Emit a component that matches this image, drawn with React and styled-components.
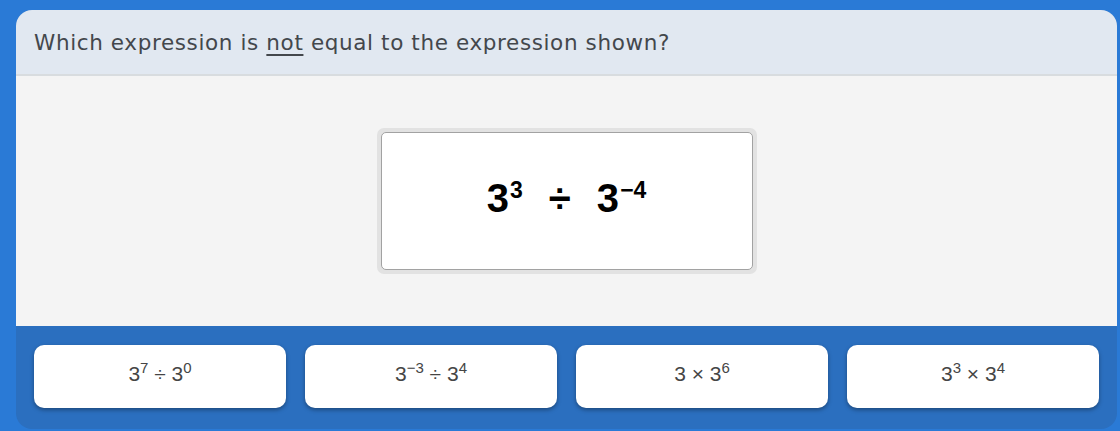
import styled, { createGlobalStyle } from 'styled-components';

const Global = createGlobalStyle`
  html, body {
    margin: 0;
    padding: 0;
    background: #2a7ad6;
  }
`;

const Page = styled.div`
  width: 1120px;
  height: 431px;
  box-sizing: border-box;
  padding: 10px 3px 0 16px;
  background: #2a7ad6;
  overflow: hidden;
`;

const Card = styled.div`
  border-radius: 16px;
  overflow: hidden;
  background: #2b6fbf;
`;

const Header = styled.div`
  height: 64px;
  background: #e1e8f1;
  border-bottom: 2px solid #d8dcdf;
  padding: 0 18px;
  display: flex;
  align-items: center;
  font-family: 'DejaVu Sans', 'Open Sans', sans-serif;
  font-size: 21.5px;
  letter-spacing: 0.62px;
  color: #43474c;

  u {
    text-decoration-thickness: 1.5px;
    text-underline-offset: 4px;
  }
`;

const Body = styled.div`
  height: 250px;
  background: #f4f4f4;
  display: flex;
  justify-content: center;
  padding-top: 52px;
  box-sizing: border-box;
`;

const Frame = styled.div`
  width: 380px;
  height: 146px;
  box-sizing: border-box;
  padding: 4px;
  border-radius: 7px;
  background: #e2e2e2;
`;

const Shown = styled.div`
  height: 100%;
  box-sizing: border-box;
  border: 1px solid #a2a2a2;
  border-radius: 5px;
  background: #fff;
  display: flex;
  align-items: center;
  justify-content: center;
  font-family: 'Liberation Sans', Arial, sans-serif;
  font-weight: bold;
  font-size: 40px;
  color: #000;
  padding-bottom: 6px;
  word-spacing: 15px;

  sup {
    font-size: 23px;
    vertical-align: 14px;
    line-height: 0;
    margin-left: 1px;
  }
`;

const Answers = styled.div`
  display: grid;
  grid-template-columns: repeat(4, 1fr);
  gap: 19px;
  padding: 19px 18px 21px;
`;

const Choice = styled.button`
  height: 63px;
  border: none;
  border-radius: 10px;
  background: #fff;
  box-shadow: 0 2px 4px rgba(0, 0, 0, 0.35);
  font-family: 'Liberation Sans', Arial, sans-serif;
  font-size: 21px;
  color: #454545;
  padding: 0 0 6px;
  cursor: pointer;

  sup {
    font-size: 15px;
    vertical-align: 8px;
    line-height: 0;
  }
`;

const choices = [
  <>3<sup>7</sup> ÷ 3<sup>0</sup></>,
  <>3<sup>−3</sup> ÷ 3<sup>4</sup></>,
  <>3 × 3<sup>6</sup></>,
  <>3<sup>3</sup> × 3<sup>4</sup></>,
];

export default function App() {
  return (
    <>
      <Global />
      <Page>
        <Card>
          <Header>
            <span>
              Which expression is <u>not</u> equal to the expression shown?
            </span>
          </Header>
          <Body>
            <Frame>
              <Shown>
                <span>
                  3<sup>3</sup> ÷ 3<sup>−4</sup>
                </span>
              </Shown>
            </Frame>
          </Body>
          <Answers>
            {choices.map((c, i) => (
              <Choice key={i}>{c}</Choice>
            ))}
          </Answers>
        </Card>
      </Page>
    </>
  );
}
